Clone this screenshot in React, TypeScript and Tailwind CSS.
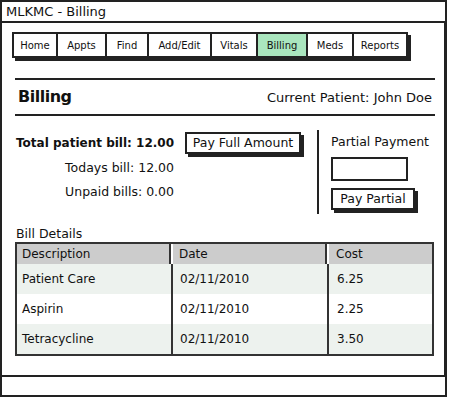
const tabs = [
  { label: "Home", w: "w-[46px]" },
  { label: "Appts", w: "w-[51px]" },
  { label: "Find", w: "w-[44px]" },
  { label: "Add/Edit", w: "w-[65px]" },
  { label: "Vitals", w: "w-[48px]" },
  { label: "Billing", w: "w-[52px]", active: true },
  { label: "Meds", w: "w-[48px]" },
  { label: "Reports", w: "w-[56px]" },
];

const rows = [
  { desc: "Patient Care", date: "02/11/2010", cost: "6.25", bg: "bg-[#edf2ee]" },
  { desc: "Aspirin", date: "02/11/2010", cost: "2.25", bg: "bg-white" },
  { desc: "Tetracycline", date: "02/11/2010", cost: "3.50", bg: "bg-[#edf2ee]" },
];

export default function App() {
  return (
    <div className="w-[450px] h-[400px] bg-white text-[#111] font-['DejaVu_Sans',sans-serif]">
      <div className="w-[447px] h-[397px] border-2 border-[#222] flex flex-col">
        <div className="h-[21px] border-b-2 border-[#222] px-[4px] text-[13px] leading-[19px]">
          MLKMC - Billing
        </div>

        <div className="flex-1 border-r-2 border-[#222] mr-[-1px] pl-[10px] pr-[9px] pt-[9px]">
          <div className="flex w-fit shadow-[3px_3px_0_#222]">
            {tabs.map((t, i) => (
              <div
                key={t.label}
                className={`${t.w} h-[26px] border-2 border-[#222] flex items-center justify-center text-[10px] ${
                  i === 0 ? "" : "-ml-[2px]"
                } ${t.active ? "bg-[#aae6be]" : "bg-white"}`}
              >
                {t.label}
              </div>
            ))}
          </div>

          <div className="ml-[3px] mt-[20px] border-t-2 border-b-2 border-[#222] h-[38px] flex items-center justify-between px-[3px]">
            <div className="text-[16px] font-bold tracking-[-0.5px]">Billing</div>
            <div className="text-[13px] pt-[2px] whitespace-nowrap">Current Patient: John Doe</div>
          </div>

          <div className="ml-[3px] mt-[16px] flex">
            <div className="w-[159px] flex flex-col items-end whitespace-nowrap">
              <div className="text-[12px] font-bold leading-[22px]">Total patient bill: 12.00</div>
              <div className="text-[12.5px] leading-[24px] mt-[2px]">Todays bill: 12.00</div>
              <div className="text-[12.5px] leading-[24px]">Unpaid bills: 0.00</div>
            </div>
            <div className="ml-[11px]">
              <div className="w-[116px] h-[22px] border-2 border-[#222] shadow-[3px_3px_0_#222] flex items-center justify-center text-[12.5px] whitespace-nowrap">
                Pay Full Amount
              </div>
            </div>
            <div className="ml-[16px] -mt-[2px] w-[2px] h-[84px] bg-[#222]"></div>
            <div className="ml-[12px] flex flex-col whitespace-nowrap">
              <div className="text-[12.5px] leading-[22px] -mt-[1px]">Partial Payment</div>
              <div className="mt-[4px] w-[77px] h-[24px] border-2 border-[#222]"></div>
              <div className="mt-[7px] w-[84px] h-[22px] border-2 border-[#222] shadow-[3px_3px_0_#222] flex items-center justify-center text-[12.5px]">
                Pay Partial
              </div>
            </div>
          </div>

          <div className="ml-[4px] mt-[12px] text-[12.5px] leading-[16px]">Bill Details</div>
          <div className="ml-[3px] w-[419px] border-2 border-[#333] text-[12px]">
            <div className="flex h-[20px] bg-[#cccccc] leading-[20px]">
              <div className="w-[154px] px-[5px] border-r-2 border-[#333] mr-[2px] shadow-[2px_0_0_white]">Description</div>
              <div className="w-[154px] px-[6px] border-r-2 border-[#333] mr-[2px] shadow-[2px_0_0_white]">Date</div>
              <div className="flex-1 px-[7px]">Cost</div>
            </div>
            {rows.map((r) => (
              <div key={r.desc} className={`flex h-[30px] items-center ${r.bg}`}>
                <div className="w-[156px] h-full flex items-center px-[5px] border-r-2 border-[#333]">{r.desc}</div>
                <div className="w-[156px] h-full flex items-center px-[7px] border-r-2 border-[#333]">{r.date}</div>
                <div className="flex-1 px-[8px]">{r.cost}</div>
              </div>
            ))}
          </div>
        </div>

        <div className="h-[20px] border-t-2 border-[#222]"></div>
      </div>
    </div>
  );
}
